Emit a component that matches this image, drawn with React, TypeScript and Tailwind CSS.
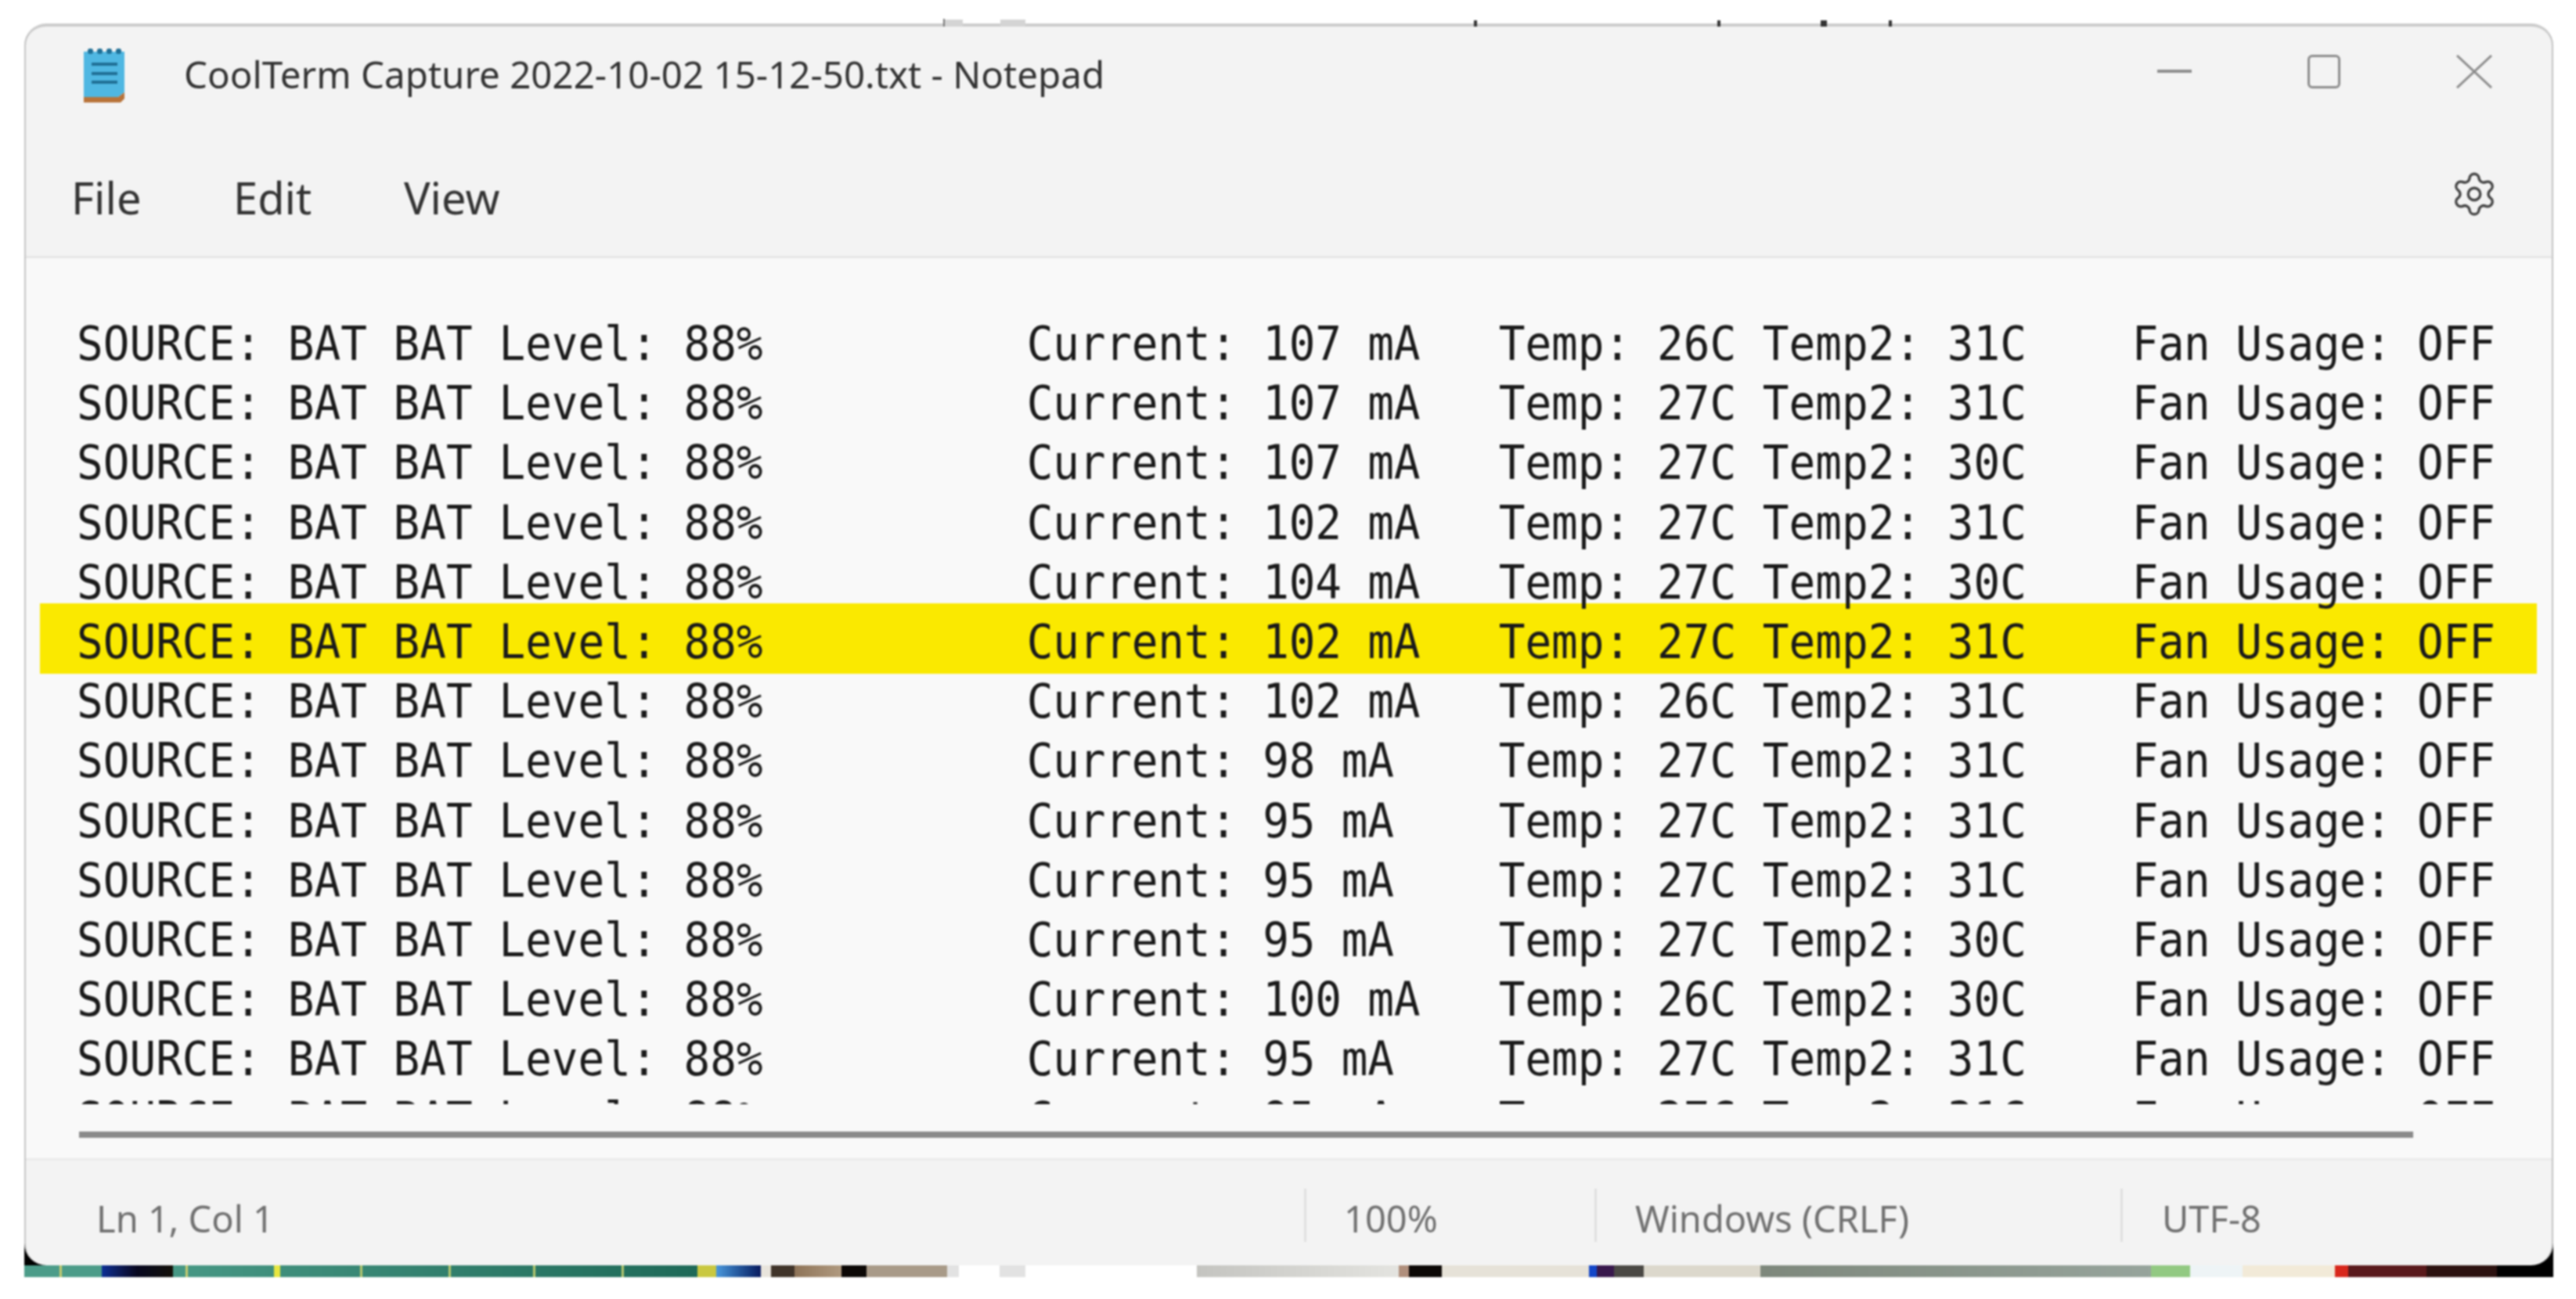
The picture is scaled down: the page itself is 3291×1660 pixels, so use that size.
import { Settings } from 'lucide-react';

// rows of the capture: current, temp, temp2
const rows: [number, number, number][] = [
  [107, 26, 31],
  [107, 27, 31],
  [107, 27, 30],
  [102, 27, 31],
  [104, 27, 30],
  [102, 27, 31],
  [102, 26, 31],
  [98, 27, 31],
  [95, 27, 31],
  [95, 27, 31],
  [95, 27, 30],
  [100, 26, 30],
  [95, 27, 31],
  [95, 27, 31],
];

function Line({ row }: { row: [number, number, number] }) {
  const [current, temp, temp2] = row;
  return (
    <span className="inline-block origin-center scale-y-[1.08]">
      <span>SOURCE: BAT BAT Level: 88%{'          '}</span>
      <span className="tracking-[-0.22px]">{`Current: ${current} mA`.padEnd(18, ' ')}</span>
      <span>{`Temp: ${temp}C Temp2: ${temp2}C    `}</span>
      <span className="tracking-[-0.6px]">Fan Usage: OFF</span>
    </span>
  );
}

function NotepadIcon() {
  return (
    <svg width="52" height="72" viewBox="0 0 52 72">
      <path d="M0 6h52v52l-8 6H0z" fill="#4fb7e2" />
      <path d="M0 64h44l8-6v8l-5 5H0z" fill="#b8733a" />
      <g fill="#1f6f96">
        <rect x="5" y="2" width="7" height="7" rx="3" />
        <rect x="17" y="2" width="7" height="7" rx="3" />
        <rect x="29" y="2" width="7" height="7" rx="3" />
        <rect x="41" y="2" width="7" height="7" rx="3" />
        <rect x="10" y="20" width="33" height="4" />
        <rect x="10" y="32" width="33" height="4" />
        <rect x="10" y="43" width="33" height="4" />
      </g>
    </svg>
  );
}

// bits of the desktop showing above the title bar
function TopTicks() {
  return (
    <div className="relative z-20 -mb-[4px] flex h-[10px] items-end">
      <div className="ml-[1174px] h-[10px] w-[2px] bg-[#777777]" />
      <div className="h-[9px] w-[23px] bg-[#d4d4d4]" />
      <div className="ml-[48px] h-[9px] w-[32px] bg-[#d4d4d4]" />
      <div className="ml-[573px] h-[8px] w-[4px] bg-[#333333]" />
      <div className="ml-[307px] h-[8px] w-[4px] bg-[#333333]" />
      <div className="ml-[128px] h-[8px] w-[8px] bg-[#333333]" />
      <div className="ml-[79px] h-[8px] w-[4px] bg-[#333333]" />
    </div>
  );
}

function BottomStrip() {
  return (
    <div className="flex h-[15px] w-full">
      <div className="w-[99px] bg-[#4c9c89] pl-[45px]">
        <div className="h-full w-[3px] bg-[#c8cc70]" />
      </div>
      <div className="w-[91px] bg-linear-to-r from-[#0b2f96] via-[#07071f] to-[#141008]" />
      <div className="flex w-[670px] bg-linear-to-r from-[#479885] to-[#1e6a58]">
        <div className="ml-[16px] w-[3px] bg-[#c8cc70]" />
        <div className="ml-[110px] w-[8px] bg-[#e6e640]" />
        <div className="ml-[102px] w-[3px] bg-[#b8c870]" />
        <div className="ml-[110px] w-[3px] bg-[#b8c870]" />
        <div className="ml-[105px] w-[3px] bg-[#b8c870]" />
        <div className="ml-[110px] w-[3px] bg-[#b8c870]" />
      </div>
      <div className="w-[24px] bg-[#c9c840]" />
      <div className="w-[57px] bg-linear-to-r from-[#4a98dc] to-[#0a1a60]" />
      <div className="w-[13px] bg-[#e8e4dc]" />
      <div className="w-[30px] bg-[#40342a]" />
      <div className="w-[60px] bg-linear-to-r from-[#8e7458] to-[#b09a80]" />
      <div className="w-[32px] bg-[#0c0806]" />
      <div className="w-[103px] bg-[#a89a88]" />
      <div className="w-[15px] bg-[#e2e2e2]" />
      <div className="w-[52px] bg-white" />
      <div className="w-[33px] bg-[#e2e2e2]" />
      <div className="w-[219px] bg-white" />
      <div className="w-[258px] bg-linear-to-r from-[#c4c4c0] to-[#e4e4e0]" />
      <div className="w-[13px] bg-[#b08f7c]" />
      <div className="w-[42px] bg-[#0c0806]" />
      <div className="w-[188px] bg-[#e6e2d8]" />
      <div className="w-[10px] bg-[#1447c8]" />
      <div className="w-[22px] bg-[#38184c]" />
      <div className="w-[38px] bg-[#4a4844]" />
      <div className="w-[149px] bg-[#dcd8cc]" />
      <div className="w-[499px] bg-linear-to-r from-[#7e887c] to-[#97a49c]" />
      <div className="w-[50px] bg-[#92c982]" />
      <div className="w-[67px] bg-[#eef4f6]" />
      <div className="w-[118px] bg-[#f2ead8]" />
      <div className="w-[17px] bg-[#d8281c]" />
      <div className="w-[100px] bg-[#5a1a1c]" />
      <div className="w-[90px] bg-[#2c1210]" />
      <div className="flex-1 bg-black" />
    </div>
  );
}

export default function App() {
  return (
    <div className="h-[1660px] w-[3291px] overflow-hidden bg-white pt-[24px] pl-[31px] blur-[0.8px]">
      <div className="flex w-[3231px] flex-col">
        <TopTicks />
        {/* Notepad window */}
        <div className="relative z-10 flex h-[1587px] flex-col rounded-[28px] border-x-2 border-t-4 border-x-[#c4c4c4] border-t-[#cccccc] bg-[#f3f3f3] font-['Noto_Sans',sans-serif]">
          <div className="flex h-[124px] shrink-0 items-center pr-[76px] pl-[74px]">
            <NotepadIcon />
            <span className="mb-[3px] ml-[76px] text-[47.5px] text-[#333333]">
              CoolTerm Capture 2022-10-02 15-12-50.txt - Notepad
            </span>
            <div className="mb-[10px] ml-auto flex items-center gap-[148px]">
              <div className="h-[4px] w-[44px] bg-[#8c8c8c]" />
              <div className="h-[43px] w-[42px] rounded-[6px] border-[3px] border-[#8c8c8c]" />
              <svg width="46" height="43" viewBox="0 0 46 43" stroke="#8c8c8c" strokeWidth="3">
                <path d="M1 1l44 41M45 1L1 42" />
              </svg>
            </div>
          </div>
          <div className="flex h-[172px] shrink-0 items-center border-b-[3px] border-[#e6e6e6] pt-[19px] pr-[68px] pl-[58px] text-[56px] text-[#333333]">
            <span className="w-[207px]">File</span>
            <span className="w-[218px]">Edit</span>
            <span>View</span>
            <Settings className="-mt-[8px] ml-auto h-[64px] w-[62px] text-[#444444]" strokeWidth={1.3} />
          </div>

          {/* Text area */}
          <div className="flex h-[1153px] shrink-0 flex-col border-b-[3px] border-[#ebebeb] bg-[#f9f9f9]">
            <div className="h-[1081px] shrink-0 overflow-hidden pt-[67px] pr-[19px] pl-[65px] font-['DejaVu_Sans_Mono',monospace] text-[56px] text-[#1a1a1a]">
              {rows.map((row, i) => (
                <div
                  key={i}
                  className={
                    i === 5
                      ? '-my-[7px] -ml-[47px] flex h-[90.2px] items-center bg-[#fae900] pt-[8px] pl-[47px] whitespace-pre'
                      : 'flex h-[76.2px] items-center pt-[8px] whitespace-pre'
                  }
                >
                  <Line row={row} />
                </div>
              ))}
            </div>
            <div className="mt-[35px] ml-[68px] h-[8px] w-[2982px] bg-[#8a8a8a]" />
          </div>

          {/* Status bar */}
          <div className="flex flex-1 items-center pt-[5px] text-[47px] text-[#707070]">
            <div className="flex h-[68px] w-[1636px] items-center border-r-[3px] border-[#e0e0e0] pt-[10px] pl-[90px]">Ln 1, Col 1</div>
            <div className="flex h-[68px] w-[371px] items-center border-r-[3px] border-[#e0e0e0] pt-[10px] pl-[48px]">100%</div>
            <div className="flex h-[68px] w-[672px] items-center border-r-[3px] border-[#e0e0e0] pt-[10px] pl-[49px]">Windows (CRLF)</div>
            <div className="flex h-[68px] items-center pt-[10px] pl-[50px]">UTF-8</div>
          </div>
        </div>

        {/* Desktop peeking out under the window */}
        <div className="-mt-[30px] flex h-[45px] flex-col">
          <div className="flex h-[30px] justify-between">
            <div className="w-[30px] bg-black" />
            <div className="w-[30px] bg-black" />
          </div>
          <BottomStrip />
        </div>
      </div>
    </div>
  );
}
